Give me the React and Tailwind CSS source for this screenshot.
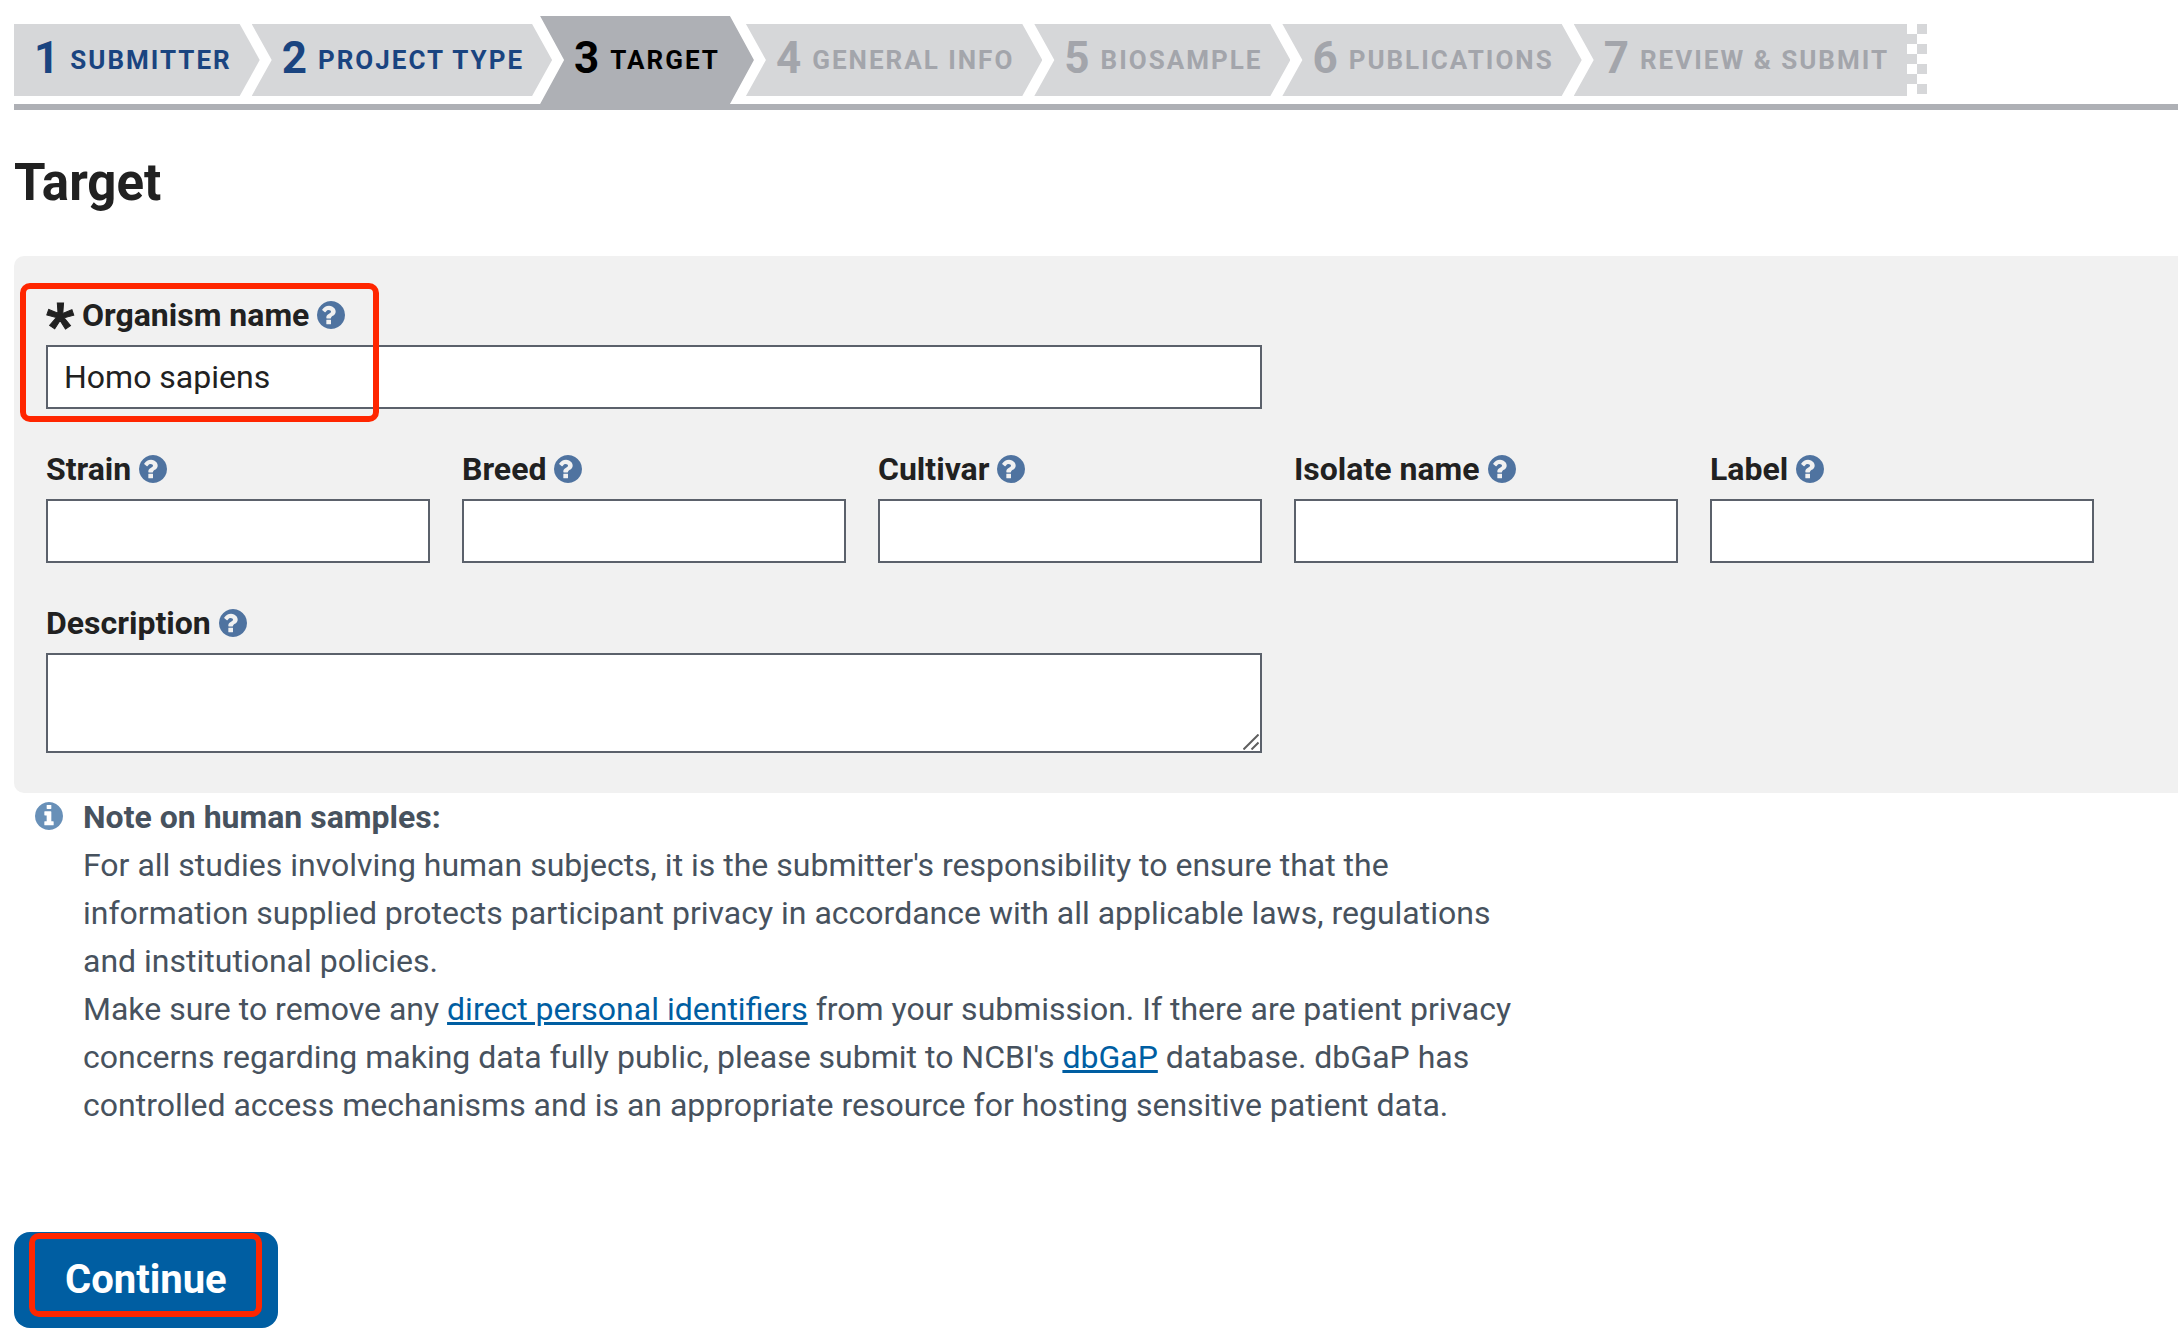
import { useState } from "react";

const steps = [
  { number: 1, title: "Submitter", state: "done" },
  { number: 2, title: "Project type", state: "done" },
  { number: 3, title: "Target", state: "current" },
  { number: 4, title: "General info", state: "todo" },
  { number: 5, title: "BioSample", state: "todo" },
  { number: 6, title: "Publications", state: "todo" },
  { number: 7, title: "Review & submit", state: "todo" },
];

const smallFields = [
  { id: "strain", label: "Strain" },
  { id: "breed", label: "Breed" },
  { id: "cultivar", label: "Cultivar" },
  { id: "isolate", label: "Isolate name" },
  { id: "label", label: "Label" },
];

const stateColors = {
  done: "bg-[#d6d7d9] text-[#1a4480]",
  current: "bg-[#aeb0b5] text-black",
  todo: "bg-[#d6d7d9] text-[#a3a5ab]",
};

const inputStyle =
  "block w-full bg-white border-2 border-[#5b616b] rounded-none px-4 text-[32px] text-[#212121] outline-none";

const linkStyle = "text-[#005ea2] underline decoration-[3px] underline-offset-2";

const QuestionIcon = () => (
  <svg viewBox="128 128 1536 1536" className="w-7 h-7 fill-[#4f73a0]" aria-hidden="true">
    <path d="M896 1376v-192q0-14-9-23t-23-9h-192q-14 0-23 9t-9 23v192q0 14 9 23t23 9h192q14 0 23-9t9-23zM1152 704q0-88-55.5-163t-138.5-116-170-41q-243 0-371 213-15 24 8 42l132 100q7 6 19 6 16 0 25-12 53-68 86-92 34-24 86-24 48 0 85.5 26t37.5 59q0 38-20 61t-68 45q-63 28-115.5 86.5t-52.5 125.5v36q0 14 9 23t23 9h192q14 0 23-9t9-23q0-19 21.5-49.5t54.5-49.5q32-18 49-28.5t46-35 44.5-48 28-60.5 12.5-81zM1664 896q0 209-103 385.5t-279.5 279.5-385.5 103-385.5-103-279.5-279.5-103-385.5 103-385.5 279.5-279.5 385.5-103 385.5 103 279.5 279.5 103 385.5z" />
  </svg>
);

const InfoIcon = () => (
  <svg viewBox="128 128 1536 1536" className="w-7 h-7 mt-[9px] shrink-0 fill-[#6890b8]" aria-hidden="true">
    <path d="M1152 1376v-160q0-14-9-23t-23-9h-96v-512q0-14-9-23t-23-9h-320q-14 0-23 9t-9 23v160q0 14 9 23t23 9h96v320h-96q-14 0-23 9t-9 23v160q0 14 9 23t23 9h448q14 0 23-9t9-23zM1024 480v-160q0-14-9-23t-23-9h-192q-14 0-23 9t-9 23v160q0 14 9 23t23 9h192q14 0 23-9t9-23zM1664 896q0 209-103 385.5t-279.5 279.5-385.5 103-385.5-103-279.5-279.5-103-385.5 103-385.5 279.5-279.5 385.5-103 385.5 103 279.5 279.5 103 385.5z" />
  </svg>
);

// Checkered finish after the last step
const FinishFlag = () => (
  <svg viewBox="0 0 20 72" className="w-5 h-[72px] shrink-0 fill-[#d6d7d9]" aria-hidden="true">
    <path d="M10 0h10v10h-10zM0 10h10v10h-10zM10 20h10v10h-10zM0 30h10v10h-10zM10 40h10v10h-10zM0 50h10v10h-10zM10 60h10v10h-10z" />
  </svg>
);

const stepShape = (index, state) => {
  if (state === "current") {
    return "h-[88px] -ml-3 pl-[34px] pr-[34px] [clip-path:polygon(0_0,calc(100%-24px)_0,100%_50%,calc(100%-24px)_100%,0_100%,24px_50%)]";
  }
  if (index === 0) {
    return "h-[72px] pl-5 pr-[28px] [clip-path:polygon(0_0,calc(100%-20px)_0,100%_50%,calc(100%-20px)_100%,0_100%)]";
  }
  if (index === steps.length - 1) {
    return "h-[72px] -ml-2 pl-[30px] pr-[18px] [clip-path:polygon(0_0,100%_0,100%_100%,0_100%,20px_50%)]";
  }
  return "h-[72px] -ml-2 pl-[30px] pr-[28px] [clip-path:polygon(0_0,calc(100%-20px)_0,100%_50%,calc(100%-20px)_100%,0_100%,20px_50%)]";
};

const StepNav = () => (
  <nav className="pt-4 border-b-[6px] border-[#aeb0b5]">
    <ol className="flex items-center h-[88px]">
      {steps.map((step, index) => (
        <li
          key={step.number}
          aria-current={step.state === "current" ? "step" : undefined}
          className={`flex items-center gap-[11px] font-bold uppercase whitespace-nowrap ${stateColors[step.state]} ${stepShape(index, step.state)}`}
        >
          <span className="text-[44px] leading-none pb-1">{step.number}</span>
          <span className="text-[26px] leading-none tracking-[2px]">{step.title}</span>
        </li>
      ))}
      <FinishFlag />
    </ol>
  </nav>
);

const FieldLabel = ({ htmlFor, required, children }) => (
  <div className="flex items-center gap-2 h-12 mb-[6px]">
    <label htmlFor={htmlFor} className="flex gap-2 h-12 text-[32px] leading-[48px] font-bold whitespace-nowrap">
      {required && (
        <span className="text-[60px] leading-[68px] font-black [-webkit-text-stroke:1px_#212121]">*</span>
      )}
      {children}
    </label>
    <button type="button" aria-label="Help">
      <QuestionIcon />
    </button>
  </div>
);

const App = () => {
  const [organism, setOrganism] = useState("Homo sapiens");

  return (
    <main className="pl-[14px] bg-white text-[#212121] font-['Roboto',sans-serif] overflow-x-hidden">
      <StepNav />

      <h1 className="my-[43px] text-[51px] leading-[60px] font-bold">Target</h1>

      <form onSubmit={(e) => e.preventDefault()}>
        <div className="flex flex-col gap-9 pt-[35px] pb-10 px-8 bg-[#f1f1f1] rounded-l-[10px]">
          <div className="relative max-w-[1216px]">
            <FieldLabel htmlFor="organism" required>Organism name</FieldLabel>
            <input
              id="organism"
              className={`${inputStyle} h-16`}
              value={organism}
              onChange={(e) => setOrganism(e.target.value)}
            />
            <div className="absolute -left-[26px] -top-2 -bottom-[13px] w-[359px] border-[6px] border-[#ff2600] rounded-[10px] pointer-events-none" />
          </div>

          <div className="flex flex-wrap gap-x-8 gap-y-9">
            {smallFields.map((field) => (
              <div key={field.id} className="w-96">
                <FieldLabel htmlFor={field.id}>{field.label}</FieldLabel>
                <input id={field.id} className={`${inputStyle} h-16`} />
              </div>
            ))}
          </div>

          <div className="relative max-w-[1216px]">
            <FieldLabel htmlFor="description">Description</FieldLabel>
            <textarea id="description" className={`${inputStyle} h-[100px] resize-none`} />
            {/* Resize grip */}
            <svg viewBox="0 0 16 16" className="absolute right-[3px] bottom-[3px] w-4 h-4 pointer-events-none" aria-hidden="true">
              <path d="M0.5 15.5L15.5 0.5M8.5 15.5L15.5 8.5" stroke="#5f5f5f" strokeWidth="2" fill="none" />
            </svg>
          </div>
        </div>

        <div className="flex gap-5 pl-[21px] text-[32px] leading-[48px] text-[#47525e]">
          <InfoIcon />
          <div className="max-w-[1440px]">
            <p className="font-bold">Note on human samples:</p>
            <p>
              For all studies involving human subjects, it is the submitter's responsibility to ensure that the
              information supplied protects participant privacy in accordance with all applicable laws, regulations
              and institutional policies.
            </p>
            <p>
              Make sure to remove any{" "}
              <a href="#identifiers" className={linkStyle}>direct personal identifiers</a>{" "}
              from your submission. If there are patient privacy concerns regarding making data fully public, please
              submit to NCBI's <a href="#dbgap" className={linkStyle}>dbGaP</a> database. dbGaP has
              controlled access mechanisms and is an appropriate resource for hosting sensitive patient data.
            </p>
          </div>
        </div>

        <div className="relative inline-block mt-[103px]">
          <button type="submit" className="block h-24 px-[51px] bg-[#005ea2] rounded-2xl text-white text-[40px] leading-none font-bold">
            Continue
          </button>
          <div className="absolute left-[15px] right-4 top-[1px] bottom-[11px] border-[6px] border-[#ff2600] rounded-[10px] pointer-events-none" />
        </div>
      </form>
    </main>
  );
};

export default App;
